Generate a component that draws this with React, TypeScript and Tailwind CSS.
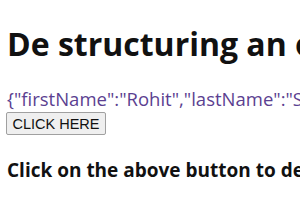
import React from "react";

export default function App() {
  return (
    <div className="w-[300px] h-[210px] overflow-hidden bg-white pl-[7px] pt-[26px]" style={{ fontFamily: '"Open Sans", "Noto Sans", sans-serif' }}>
      <h1 className="text-[32px] leading-[36px] font-bold text-[#111] whitespace-nowrap">De structuring an object</h1>
      <div className="mt-[26px] text-[18.5px] leading-[22px] text-[#5b3f91] whitespace-nowrap">{'{"firstName":"Rohit","lastName":"Sharma","age":33}'}</div>
      <button className="mt-[2px] block h-[23px] w-[100px] -ml-[1px] border border-[#a0a0a0] bg-[#efefef] rounded-[2px] text-[14.5px] leading-[18px] text-[#111]" style={{ fontFamily: '"Liberation Sans", Arial, sans-serif' }}>CLICK HERE</button>
      <h3 className="mt-[23px] text-[19px] leading-[24px] font-bold text-[#111] whitespace-nowrap">Click on the above button to destructure the object</h3>
    </div>
  );
}
